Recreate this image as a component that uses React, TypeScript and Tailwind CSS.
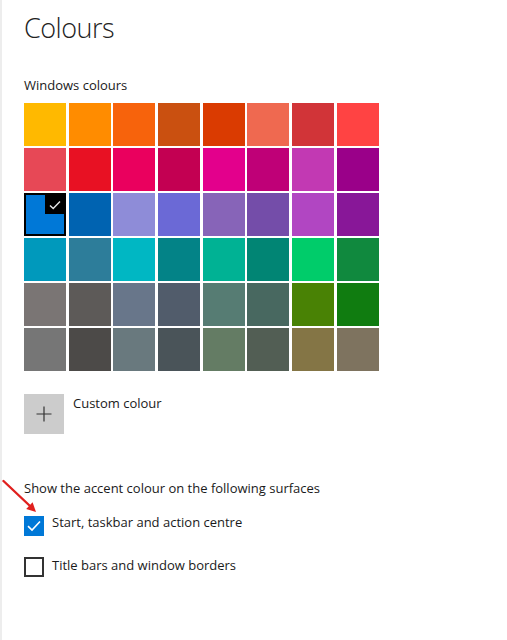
import React from "react";

const rows: string[][] = [
  ["#FFB900", "#FF8C00", "#F7630C", "#CA5010", "#DA3B01", "#EF6950", "#D13438", "#FF4343"],
  ["#E74856", "#E81123", "#EA005E", "#C30052", "#E3008C", "#BF0077", "#C239B3", "#9A0089"],
  ["#0078D7", "#0063B1", "#8E8CD8", "#6B69D6", "#8764B8", "#744DA9", "#B146C2", "#881798"],
  ["#0099BC", "#2D7D9A", "#00B7C3", "#038387", "#00B294", "#018574", "#00CC6A", "#10893E"],
  ["#7A7574", "#5D5A58", "#68768A", "#515C6B", "#567C73", "#486860", "#498205", "#107C10"],
  ["#767676", "#4C4A48", "#69797E", "#4A5459", "#647C64", "#525E54", "#847545", "#7E735F"],
];

function Tile({ color, selected }: { color: string; selected: boolean }) {
  return (
    <div
      className={
        selected
          ? "relative w-[42px] h-[43px] border-2 border-black"
          : "relative w-[42px] h-[43px]"
      }
      style={{ backgroundColor: color }}
    >
      {selected && (
        <div className="absolute top-0 right-0 w-[19px] h-[19px] bg-black flex items-center justify-center">
          <svg width="12" height="10" viewBox="0 0 12 10">
            <path d="M1 5.5 L4.2 8.5 L11 1.5" fill="none" stroke="#e8e8e8" strokeWidth="1.4" />
          </svg>
        </div>
      )}
    </div>
  );
}

export default function App() {
  const font = { fontFamily: '"Open Sans", "Noto Sans", sans-serif' };
  return (
    <div
      className="relative w-[507px] h-[640px] bg-white border-l-2 border-[#ededed] pl-[22px] text-[#1a1a1a]"
      style={font}
    >
      <div className="pt-[13px] text-[27px] leading-[30px] font-light tracking-[-0.5px] text-[#222]">Colours</div>
      <div className="mt-[32px] text-[13px] leading-[20px]">Windows colours</div>
      <div className="mt-[8px] grid grid-cols-[repeat(8,42px)] auto-rows-[43px] gap-x-[2.7px] gap-y-[2px]">
        {rows.flatMap((r, ri) =>
          r.map((c, ci) => <Tile key={`${ri}-${ci}`} color={c} selected={ri === 2 && ci === 0} />)
        )}
      </div>
      <div className="mt-[23px] flex items-start">
        <div className="w-[40px] h-[40px] bg-[#cccccc] flex items-center justify-center">
          <svg width="16" height="16" viewBox="0 0 16 16">
            <path d="M8 0.5 V15.5 M0.5 8 H15.5" stroke="#333" strokeWidth="1.2" />
          </svg>
        </div>
        <div className="ml-[9px] -mt-[1px] text-[13px] leading-[20px]">Custom colour</div>
      </div>
      <div className="mt-[44px] text-[13px] leading-[20px]">
        Show the accent colour on the following surfaces
      </div>
      <div className="mt-[18px] flex items-start">
        <div className="w-[20px] h-[20px] bg-[#0078d7] flex items-center justify-center">
          <svg width="14" height="12" viewBox="0 0 14 12">
            <path d="M1 6.2 L5 10 L13 1.5" fill="none" stroke="#fff" strokeWidth="1.6" />
          </svg>
        </div>
        <div className="ml-[8px] -mt-[4px] text-[13px] leading-[20px]">Start, taskbar and action centre</div>
      </div>
      <div className="mt-[21px] flex items-start">
        <div className="w-[20px] h-[20px] border-2 border-[#333] bg-white" />
        <div className="ml-[8px] -mt-[2px] text-[13px] leading-[20px]">Title bars and window borders</div>
      </div>

      <svg className="absolute left-0 top-[475px]" width="40" height="45" viewBox="0 475 40 45">
        <path d="M1.5 481 L28 506" stroke="#e0201e" strokeWidth="2.4" strokeLinecap="round" />
        <path d="M34 512 L24.2 509 L30.6 502.3 Z" fill="#e0201e" />
      </svg>
    </div>
  );
}
